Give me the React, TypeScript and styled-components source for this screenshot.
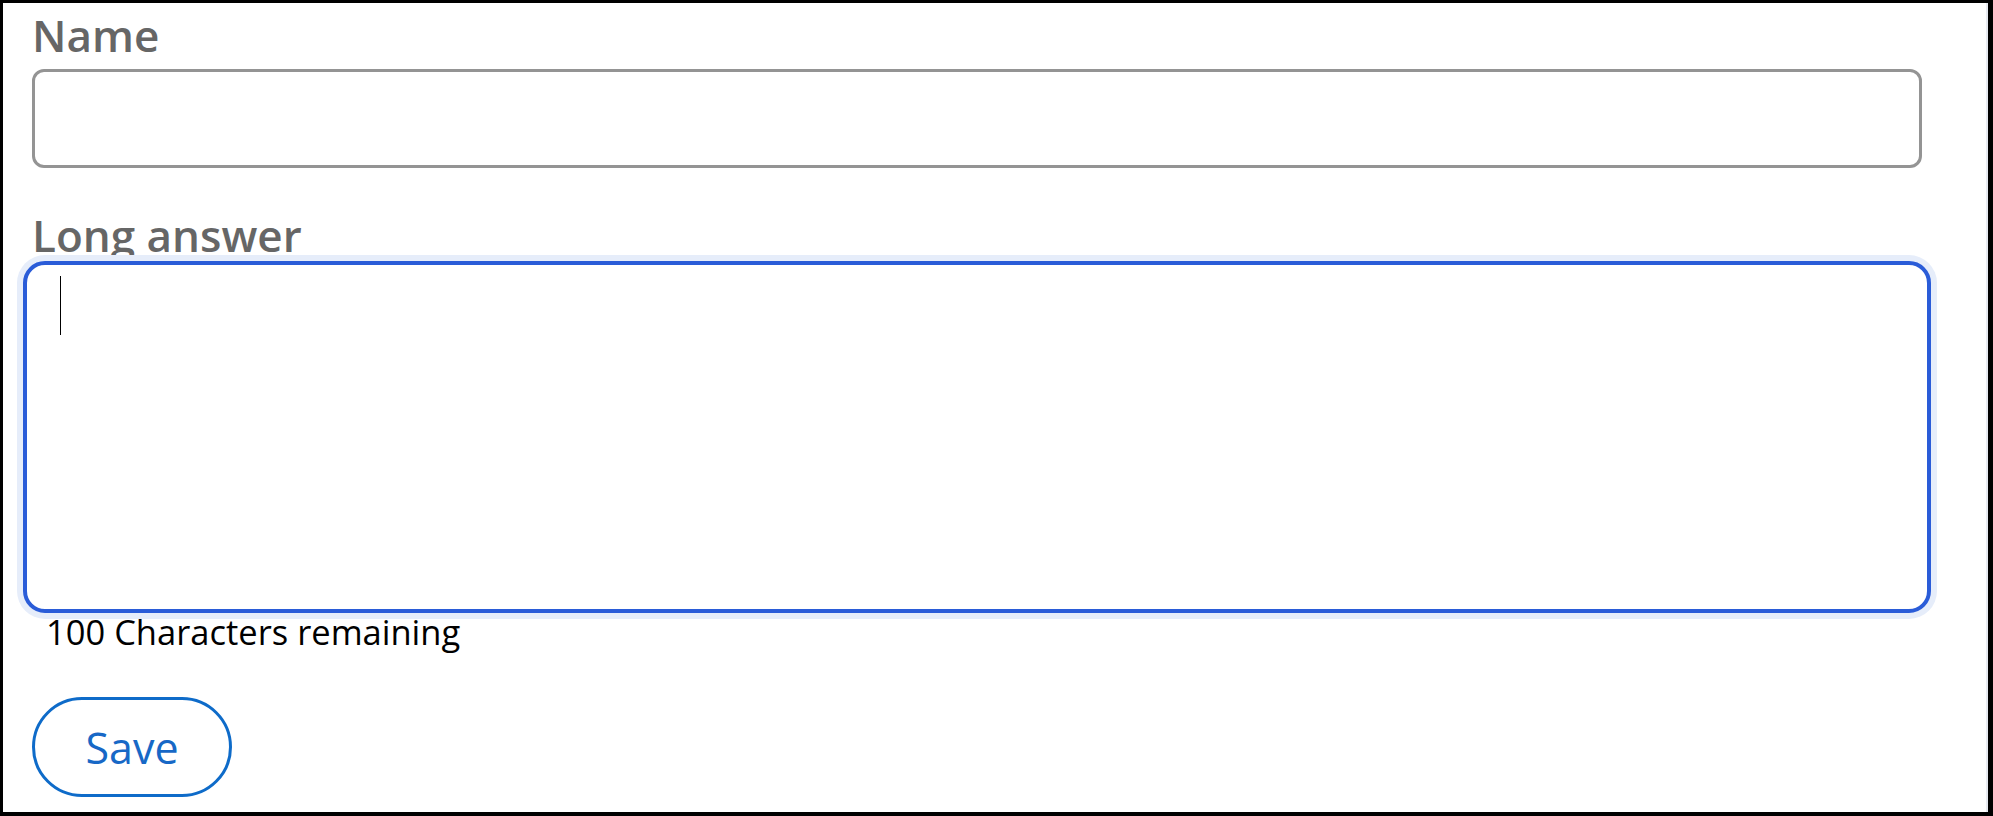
import React from 'react'
import styled, { createGlobalStyle } from 'styled-components'

const GlobalStyle = createGlobalStyle`
  html, body {
    margin: 0;
    padding: 0;
    background: #fff;
  }
  * {
    box-sizing: border-box;
  }
`

const Frame = styled.div`
  height: 100vh;
  border: 3px solid #000;
  border-right-width: 5px;
  border-bottom-width: 4px;
  box-shadow: inset -2px 0 0 #e6e9f0;
  background: #fff;
  font-family: 'Open Sans', 'Noto Sans', sans-serif;
`

const Form = styled.form`
  display: flex;
  flex-direction: column;
  padding: 7px 66px 0 29px;
`

const Label = styled.label<{ $top?: number; $bottom?: number }>`
  display: block;
  font-size: 44px;
  font-weight: 600;
  line-height: 50px;
  color: #666;
  margin-top: ${(p) => p.$top ?? 0}px;
  margin-bottom: ${(p) => p.$bottom ?? 0}px;
`

const TextInput = styled.input`
  height: 99px;
  width: 100%;
  border: 3px solid #949494;
  border-radius: 12px;
  padding: 0 24px;
  font: inherit;
  font-size: 34px;
  outline: none;
  background: #fff;
`

const AreaWrap = styled.div`
  position: relative;
  height: 352px;
  margin: 0 -9px;
`

const TextArea = styled.textarea`
  display: block;
  width: 100%;
  height: 100%;
  border: 4px solid #2a5cd8;
  border-radius: 22px;
  box-shadow: 0 0 0 6px #e6edfa;
  padding: 12px 34px;
  font: inherit;
  font-size: 34px;
  resize: none;
  outline: none;
  caret-color: transparent;
  background: #fff;
`

const Caret = styled.span`
  position: absolute;
  left: 37px;
  top: 15px;
  width: 1px;
  height: 59px;
  background: #000;
`

const Counter = styled.div`
  font-size: 34.5px;
  line-height: 36px;
  color: #000;
  padding-left: 14px;
  margin-top: 1px;
`

const SaveButton = styled.button`
  align-self: flex-start;
  margin-top: 47px;
  width: 200px;
  height: 100px;
  border: 3px solid #0e6bc9;
  border-radius: 50px;
  background: #fff;
  color: #1768c6;
  font: inherit;
  font-size: 43px;
  cursor: pointer;
`

export default function App() {
  return (
    <>
      <GlobalStyle />
      <Frame>
        <Form onSubmit={(e) => e.preventDefault()}>
          <Label htmlFor="name" $bottom={9}>
            Name
          </Label>
          <TextInput id="name" type="text" />
          <Label htmlFor="answer" $top={42} $bottom={1}>
            Long answer
          </Label>
          <AreaWrap>
            <TextArea id="answer" maxLength={100} />
            <Caret />
          </AreaWrap>
          <Counter>100 Characters remaining</Counter>
          <SaveButton type="submit">Save</SaveButton>
        </Form>
      </Frame>
    </>
  )
}
